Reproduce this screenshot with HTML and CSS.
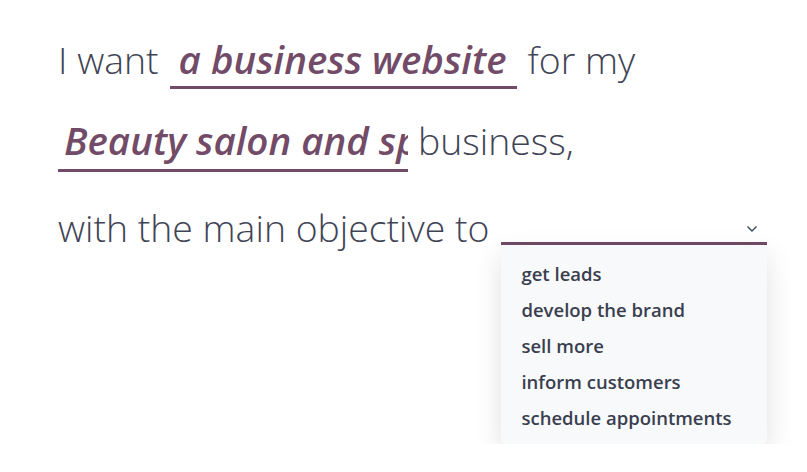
FILE: index.html
```html
<!DOCTYPE html>
<html lang="en">
<head>
<meta charset="utf-8">
<title>Website configurator</title>
<link rel="stylesheet" href="styles.css">
</head>
<body>
<main class="sentence">
  <div class="row row-1">
    <span class="word">I want</span>
    <span class="field field-type"><span class="value">a business website</span></span>
    <span class="word">for my</span>
  </div>
  <div class="row row-2">
    <span class="field field-industry"><span class="value">Beauty salon and spa</span></span>
    <span class="word">business,</span>
  </div>
  <div class="row row-3">
    <span class="word">with the main objective to</span>
    <div class="select">
      <div class="select-toggle">
        <svg class="chevron" width="12" height="8" viewBox="0 0 12 8"><path d="M1.5 1.5 L6 6 L10.5 1.5" fill="none" stroke="#2f4a54" stroke-width="1.4"/></svg>
      </div>
      <ul class="menu">
        <li>get leads</li>
        <li>develop the brand</li>
        <li>sell more</li>
        <li>inform customers</li>
        <li>schedule appointments</li>
      </ul>
    </div>
  </div>
</main>
</body>
</html>
```
FILE: styles.css
```css
html, body {
  margin: 0;
  padding: 0;
  background: #ffffff;
}
body {
  font-family: "Open Sans", "Noto Sans", sans-serif;
  color: #3f4455;
}
.sentence {
  padding: 36px 0 0 58px;
  display: flex;
  flex-direction: column;
}
.row {
  display: flex;
  align-items: baseline;
}
.row-2 {
  margin-top: 28px;
}
.row-3 {
  margin-top: 33px;
  align-items: flex-start;
}
.word {
  font-size: 37.4px;
  font-weight: 300;
  line-height: 46px;
  white-space: nowrap;
}
.field {
  display: block;
  border-bottom: 3px solid #714b67;
  white-space: nowrap;
  box-sizing: border-box;
}
.value {
  display: block;
  font-size: 38.5px;
  font-weight: 600;
  font-style: italic;
  color: #714b67;
  line-height: 46px;
}
.field-type {
  width: 347px;
  margin: 0 11px 0 11px;
  padding: 0 0 4px 9px;
}
.field-industry {
  width: 350px;
  margin-right: 10px;
  padding: 0 0 6px 6px;
  overflow: hidden;
}
.select {
  margin-left: 12px;
  width: 266px;
  display: flex;
  flex-direction: column;
}
.select-toggle {
  box-sizing: border-box;
  height: 40px;
  border-bottom: 3px solid #714b67;
  display: flex;
  justify-content: flex-end;
  align-items: flex-end;
  padding: 0 9px 9px 0;
}
.chevron {
  display: block;
}
.menu {
  margin: 0;
  padding: 11px 0 8px;
  list-style: none;
  background: #f8f9fb;
  border-radius: 0 0 5px 5px;
  box-shadow: 0 10px 28px rgba(0, 0, 0, 0.12);
}
.menu li {
  font-size: 18.5px;
  font-weight: 600;
  color: #3a3f4f;
  line-height: 36px;
  padding-left: 20px;
  white-space: nowrap;
}
```
